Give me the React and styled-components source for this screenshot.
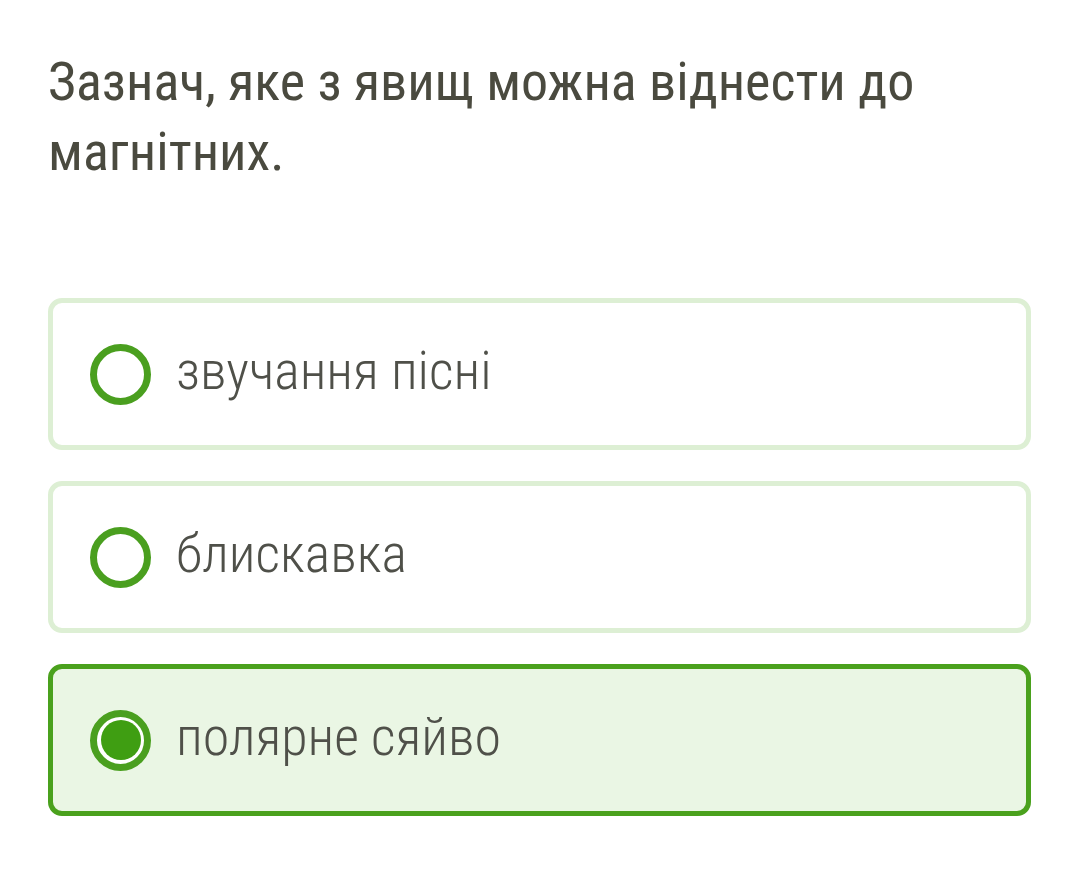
import React from "react";
import styled, { createGlobalStyle } from "styled-components";

const Global = createGlobalStyle`
  html, body { margin: 0; padding: 0; background: #ffffff; }
  body { font-family: "Roboto Condensed", Roboto, "Noto Sans", sans-serif; }
`;

const Page = styled.div`
  width: 1080px;
  min-height: 888px;
  box-sizing: border-box;
  padding: 47px 49px 0 48px;
`;

const Question = styled.h1`
  margin: 0 0 111px;
  font-family: "Roboto Condensed", Roboto, "Noto Sans", sans-serif;
  font-stretch: 80%;
  font-weight: 400;
  font-size: 54px;
  line-height: 70px;
  color: #4a4a3f;
`;

const Options = styled.div`
  display: flex;
  flex-direction: column;
  gap: 31px;
`;

const Option = styled.label`
  display: flex;
  align-items: center;
  gap: 25px;
  height: 152px;
  box-sizing: border-box;
  padding: 0 0 0 37px;
  border: 5px solid ${(p) => (p.$selected ? "#4aa11d" : "#ddefd4")};
  border-radius: 14px;
  background: ${(p) => (p.$selected ? "#eaf6e4" : "#ffffff")};
  cursor: pointer;
`;

const Radio = styled.span`
  flex: none;
  width: 61px;
  height: 61px;
  box-sizing: border-box;
  border-radius: 50%;
  border: 7px solid #4a9f1f;
  background: #ffffff;
  display: flex;
  align-items: center;
  justify-content: center;
`;

const Dot = styled.span`
  width: 40px;
  height: 40px;
  border-radius: 50%;
  background: #3f9e12;
`;

const OptionText = styled.span`
  font-family: "Roboto Condensed", Roboto, "Noto Sans", sans-serif;
  font-stretch: 80%;
  font-weight: 300;
  font-size: 54px;
  color: #4f5049;
  line-height: 1;
  padding-bottom: 6px;
`;

const options = [
  { text: "звучання пісні", selected: false },
  { text: "блискавка", selected: false },
  { text: "полярне сяйво", selected: true },
];

export default function App() {
  return (
    <>
      <Global />
      <Page>
        <Question>Зазнач, яке з явищ можна віднести до магнітних.</Question>
        <Options>
          {options.map((o) => (
            <Option key={o.text} $selected={o.selected}>
              <Radio>{o.selected && <Dot />}</Radio>
              <OptionText>{o.text}</OptionText>
            </Option>
          ))}
        </Options>
      </Page>
    </>
  );
}
